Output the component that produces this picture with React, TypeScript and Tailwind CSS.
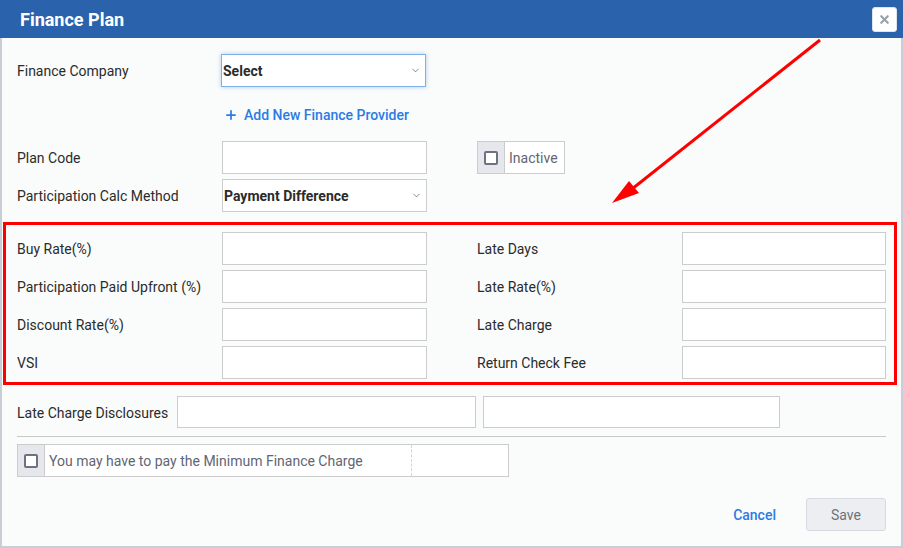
import React from 'react';
import { X, ChevronDown, Plus } from 'lucide-react';

const font = { fontFamily: 'Roboto, "Liberation Sans", sans-serif' };

const Input: React.FC<{ w?: string }> = ({ w = 'w-[205px]' }) => (
    <div className={`${w} h-[33px] border border-[#cccccc] bg-white shrink-0`} />
);

const SelectBox: React.FC<{ value: string; focused?: boolean }> = ({ value, focused }) => (
    <div
        className={`w-[205px] h-[33px] bg-white flex items-center justify-between pl-[1px] pr-[4px] shrink-0 border ${
            focused ? 'border-[#7fb0ea] shadow-[0_0_4px_rgba(80,150,230,0.45)]' : 'border-[#cccccc]'
        }`}
    >
        <span className="mt-[2px] text-[14px] font-bold text-[#2b2b2b]">{value}</span>
        <ChevronDown size={11} strokeWidth={1.5} className="text-[#555]" />
    </div>
);

const Check: React.FC = () => (
    <span className="block w-[14px] h-[14px] border-2 border-[#6b7280] rounded-[2px] bg-white" />
);

const Label: React.FC<{ w: string; children: React.ReactNode; className?: string }> = ({ w, children, className = '' }) => (
    <div className={`${w} mt-[2px] text-[14px] text-[#2b2b2b] shrink-0 ${className}`}>{children}</div>
);

const Row: React.FC<{ left: string; right: string }> = ({ left, right }) => (
    <div className="flex items-center">
        <Label w="w-[205px]">{left}</Label>
        <Input />
        <Label w="w-[205px]" className="ml-[50px]">{right}</Label>
        <Input w="w-[204px]" />
    </div>
);

const App: React.FC = () => {
    return (
        <div className="relative w-[903px] h-[548px] overflow-hidden" style={font}>
            {/* header */}
            <div className="h-[38px] bg-[#2a62ac] flex items-center justify-between pl-[20px] pr-[6px]">
                <h1 className="text-[18px] font-bold text-white">Finance Plan</h1>
                <button className="w-[25px] h-[25px] bg-white rounded-[3px] border border-[#dfe3ea] flex items-center justify-center">
                    <X size={13} strokeWidth={4} className="text-[#9aa0a8]" />
                </button>
            </div>

            {/* body */}
            <div className="h-[510px] bg-[#fafbfb] border-l-2 border-r-2 border-b-2 border-[#c9cdd6]">
                <div className="pl-[15px] pt-[16px]">
                    <div className="flex items-center">
                        <Label w="w-[204px]">Finance Company</Label>
                        <SelectBox value="Select" focused />
                    </div>
                    <div className="h-[54px] flex items-center pt-[2px] pl-[207px]">
                        <span className="flex items-center gap-[6px] text-[14px] font-medium text-[#2b7be4]">
                            <Plus size={14} strokeWidth={3} />
                            Add New Finance Provider
                        </span>
                    </div>
                    <div className="flex items-center">
                        <Label w="w-[205px]">Plan Code</Label>
                        <Input />
                        <div className="ml-[50px] h-[33px] flex border border-[#cccccc] bg-white">
                            <div className="w-[27px] bg-[#e5e7ec] border-r border-[#cccccc] flex items-center justify-center">
                                <Check />
                            </div>
                            <div className="pl-[4px] pr-[6px] pt-[2px] flex items-center text-[14px] text-[#5f6672]">Inactive</div>
                        </div>
                    </div>
                    <div className="flex items-center mt-[5px]">
                        <Label w="w-[205px]">Participation Calc Method</Label>
                        <SelectBox value="Payment Difference" />
                    </div>
                </div>

                {/* highlighted block */}
                <div className="mt-[10px] ml-[1px] mr-[4px] border-[3px] border-[#ff0000] pl-[11px] pt-[7px] pb-[3px] flex flex-col gap-[5px]">
                    <Row left="Buy Rate(%)" right="Late Days" />
                    <Row left="Participation Paid Upfront (%)" right="Late Rate(%)" />
                    <Row left="Discount Rate(%)" right="Late Charge" />
                    <Row left="VSI" right="Return Check Fee" />
                </div>

                <div className="pl-[15px] pr-[15px]">
                    <div className="flex items-center mt-[11px]">
                        <Label w="w-[160px]">Late Charge Disclosures</Label>
                        <div className="w-[299px] h-[32px] border border-[#cccccc] bg-white" />
                        <div className="ml-[7px] w-[297px] h-[32px] border border-[#cccccc] bg-white" />
                    </div>
                    <div className="mt-[8px] w-[869px] border-t border-[#c8c8c8]" />
                    <div className="mt-[7px] w-[492px] h-[33px] flex border border-[#cccccc] bg-white">
                        <div className="w-[27px] bg-[#e5e7ec] border-r border-[#cccccc] flex items-center justify-center">
                            <Check />
                        </div>
                        <div className="w-[367px] pl-[4px] pt-[2px] flex items-center text-[14px] text-[#5f6672] border-r border-dashed border-[#d4d4d4]">
                            You may have to pay the Minimum Finance Charge
                        </div>
                        <div className="flex-1" />
                    </div>
                    <div className="mt-[21px] flex items-center justify-end">
                        <span className="mt-[2px] text-[14px] font-medium text-[#2b7be4]">Cancel</span>
                        <button className="ml-[30px] w-[80px] h-[33px] rounded-[3px] bg-[#eceef1] border border-[#d7dae0] pt-[2px] text-[14px] text-[#6c727a]">
                            Save
                        </button>
                    </div>
                </div>
            </div>

            {/* annotation arrow */}
            <svg className="absolute left-0 top-0 pointer-events-none" width="903" height="548">
                <line x1="820" y1="40" x2="632" y2="189" stroke="#ff0000" strokeWidth="3" />
                <polygon points="612,203 629,181 639,193" fill="#ff0000" />
            </svg>
        </div>
    );
};

export default App;
